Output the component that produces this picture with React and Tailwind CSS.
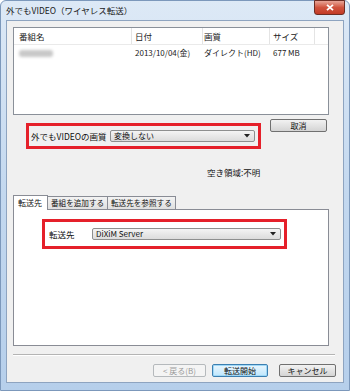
import React from 'react';

const font = { fontFamily: "'Noto Sans CJK JP', 'Liberation Sans', sans-serif" };

function Combo({ value, width }) {
  return (
    <div
      className={`flex items-center justify-between h-[12px] ${width} border border-[#8e8f8f] rounded-[2px] bg-gradient-to-b from-[#f4f4f4] to-[#dcdcdc] pl-[3px] pr-[4px]`}
    >
      <span className="text-[8px] leading-none text-[#111]">{value}</span>
      <svg width="6" height="4" viewBox="0 0 6 4">
        <path d="M0 0 H6 L3 3.5 Z" fill="#222" />
      </svg>
    </div>
  );
}

function Btn({ label, width, kind }) {
  if (kind === 'disabled') {
    return (
      <div className={`flex items-center justify-center h-[13px] ${width} border border-[#b5b9bc] rounded-[2px] bg-[#f4f4f4] text-[8px] leading-none text-[#9a9a9a]`}>
        {label}
      </div>
    );
  }
  if (kind === 'default') {
    return (
      <div className={`flex items-center justify-center h-[13px] ${width} border border-[#3c7fb1] rounded-[2px] bg-gradient-to-b from-[#eaf6fd] to-[#bee6fd] shadow-[inset_0_0_0_1px_#9fd8f7] text-[8px] leading-none text-[#111]`}>
        {label}
      </div>
    );
  }
  return (
    <div className={`flex items-center justify-center h-[13px] ${width} border border-[#707070] rounded-[2px] bg-gradient-to-b from-[#f2f2f2] to-[#d4d4d4] text-[8px] leading-none text-[#111]`}>
      {label}
    </div>
  );
}

export default function App() {
  return (
    <div style={font} className="w-[350px] h-[391px] bg-white">
      <div className="flex flex-col w-[350px] h-[391px] rounded-t-[6px] border border-[#7c98bb] bg-gradient-to-b from-[#dde9f6] via-[#c3d8ef] to-[#b6cfeb] px-[5px] pb-[7px]">
        {/* title bar */}
        <div className="flex items-start justify-between h-[19px]">
          <span className="mt-[4px] text-[8.5px] leading-[11px] text-[#1b1b1b]">外でもVIDEO（ワイヤレス転送）</span>
          <div className="flex items-center justify-center w-[31px] h-[15px] mr-[-1px] mt-[-1px] rounded-b-[3px] border border-[#6d2d24] bg-gradient-to-b from-[#e7a497] via-[#d0533e] to-[#c23a26]">
            <svg width="8" height="7" viewBox="0 0 8 7">
              <path d="M1 0.8 L7 6.2 M7 0.8 L1 6.2" stroke="#fff" strokeWidth="1.8" />
            </svg>
          </div>
        </div>

        {/* client area */}
        <div className="flex flex-col flex-1 border border-[#8ea4c0] bg-[#f0f0f0] pl-[6px]">
          {/* list */}
          <div className="mt-[6px] w-[316px] h-[88px] border border-[#8a9099] bg-white">
            <div className="flex h-[17px] border-b border-[#eaeaea] text-[8.5px] leading-[17px] text-[#222]">
              <div className="w-[118px] pl-[5px] border-r border-[#e4e4e4]">番組名</div>
              <div className="w-[71px] pl-[3px] border-r border-[#e4e4e4]">日付</div>
              <div className="w-[67px] pl-[1px] border-r border-[#e4e4e4]">画質</div>
              <div className="w-[45px] pl-[3px] border-r border-[#e4e4e4]">サイズ</div>
            </div>
            <div className="flex items-center h-[14px] mt-[1px] text-[8px] leading-none text-[#222]">
              <div className="w-[118px] pl-[5px]">
                <div className="w-[34px] h-[7px] rounded-[3px] bg-[#c8c8c8] blur-[1.5px]" />
              </div>
              <div className="w-[71px] pl-[3px]">2013/10/04(金)</div>
              <div className="w-[67px] pl-[1px]">ダイレクト(HD)</div>
              <div className="w-[45px] pl-[3px]">677 MB</div>
            </div>
          </div>

          {/* quality row */}
          <div className="flex items-start mt-[4px]">
            <div className="flex items-center justify-between ml-[13px] mt-[4px] w-[235px] h-[26px] border-[3px] border-[#e5202a] pl-[2px] pr-[3px]">
              <span className="text-[8.5px] leading-none text-[#111]">外でもVIDEOの画質</span>
              <Combo value="変換しない" width="w-[145px]" />
            </div>
            <div className="ml-[9px]">
              <Btn label="取消" width="w-[57px]" />
            </div>
          </div>

          <div className="mt-[18px] ml-[194px] text-[8.5px] leading-[11px] text-[#111]">空き領域:不明</div>

          {/* tabs */}
          <div className="flex items-end mt-[16px] h-[15px] whitespace-nowrap">
            <div className="flex items-center h-[15px] w-[35px] border border-b-0 border-[#898c95] bg-white pl-[4px] text-[8px] leading-none text-[#111] relative z-10 mb-[-1px]">
              転送先
            </div>
            <div className="flex items-center h-[13px] w-[60px] border border-l-0 border-b-0 border-[#898c95] bg-gradient-to-b from-[#f3f3f3] to-[#e0e0e0] pl-[3px] text-[7.6px] leading-none text-[#111]">
              番組を追加する
            </div>
            <div className="flex items-center h-[13px] w-[68px] border border-l-0 border-b-0 border-[#898c95] bg-gradient-to-b from-[#f3f3f3] to-[#e0e0e0] pl-[3px] text-[7.6px] leading-none text-[#111]">
              転送先を参照する
            </div>
          </div>
          <div className="w-[316px] h-[137px] border border-[#898c95] bg-white pl-[28px] pt-[9px]">
            <div className="flex items-center w-[245px] h-[30px] border-[3px] border-[#e5202a] pl-[4px]">
              <span className="w-[43px] text-[8.5px] leading-none text-[#111]">転送先</span>
              <Combo value="DiXiM Server" width="w-[189px]" />
            </div>
          </div>

          {/* separator */}
          <div className="mt-[8px] w-[322px] border-t border-[#b4b4b4] border-b border-b-white" />

          {/* buttons */}
          <div className="flex items-center mt-[8px] ml-[140px]">
            <Btn label="< 戻る(B)" width="w-[53px]" kind="disabled" />
            <div className="ml-[6px]">
              <Btn label="転送開始" width="w-[56px]" kind="default" />
            </div>
            <div className="ml-[11px]">
              <Btn label="キャンセル" width="w-[57px]" />
            </div>
          </div>
        </div>
      </div>
    </div>
  );
}
